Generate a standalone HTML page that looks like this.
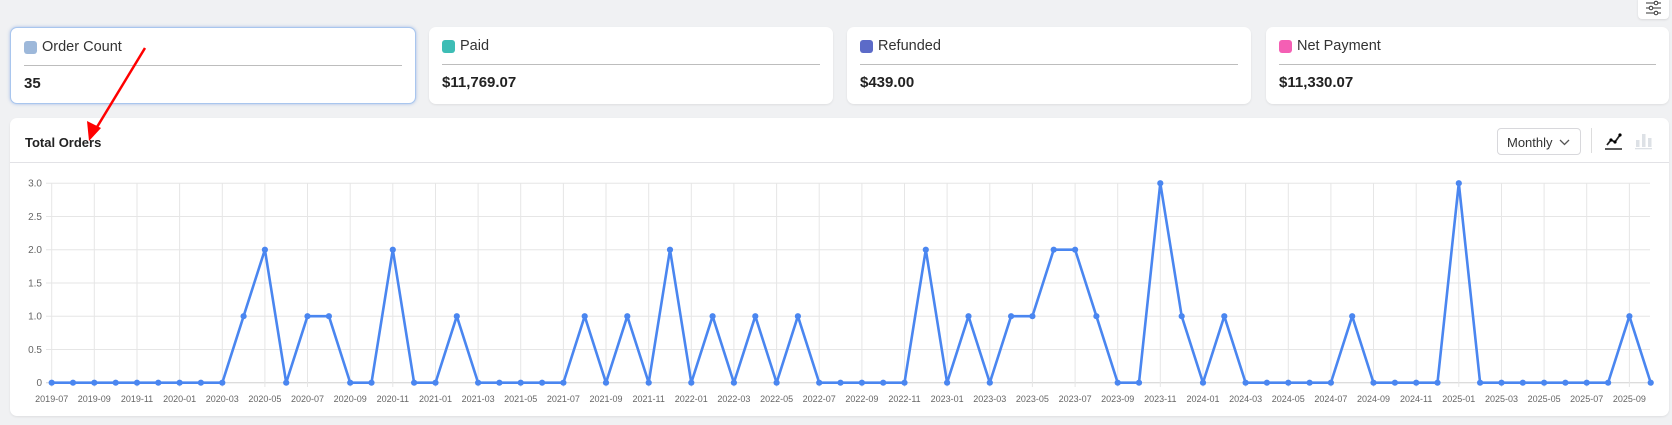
<!DOCTYPE html>
<html><head><meta charset="utf-8"><style>
*{box-sizing:border-box;margin:0;padding:0}
body{width:1672px;height:425px;background:#f0f1f3;font-family:"Liberation Sans",Arial,sans-serif;position:relative;overflow:hidden;color:#222}
.card{position:absolute;top:27px;height:77px;background:#fff;border-radius:7px;box-shadow:0 1px 2px rgba(0,0,0,.08)}
.card.sel{border:1px solid #a9c6ee;box-shadow:0 0 3px rgba(90,140,220,.5)}
.lab{position:absolute;left:13px;top:11px;font-size:14.5px;color:#333;display:flex;align-items:center}
.sw{width:13px;height:13px;border-radius:3px;margin-right:5px}
.div{position:absolute;left:13px;right:13px;top:37px;border-top:1px solid #bdbdbd}
.val{position:absolute;left:13px;top:47px;font-size:15px;font-weight:bold;color:#222}
.panel{position:absolute;left:10px;top:118px;width:1659px;height:298px;background:#fff;border-radius:7px;box-shadow:0 1px 2px rgba(0,0,0,.08)}
</style></head><body>
<div style="position:absolute;left:1638px;top:-4px;width:31px;height:23px;background:#fff;border-radius:4px;box-shadow:0 1px 2px rgba(0,0,0,.1)">
<svg width="31" height="23" viewBox="0 0 31 23"><g stroke="#333" stroke-width="1" fill="#fff"><line x1="8" y1="7" x2="23" y2="7"/><line x1="8" y1="12" x2="23" y2="12"/><line x1="8" y1="17" x2="23" y2="17"/><circle cx="18" cy="7" r="1.8"/><circle cx="13" cy="12" r="1.8"/><circle cx="18" cy="17" r="1.8"/></g></svg></div>

<div class="card sel" style="left:10px;width:406px"><div class="lab"><span class="sw" style="background:#9db8da"></span>Order Count</div><div class="div"></div><div class="val">35</div></div>
<div class="card" style="left:429px;width:404px"><div class="lab"><span class="sw" style="background:#3dbdb5"></span>Paid</div><div class="div"></div><div class="val">$11,769.07</div></div>
<div class="card" style="left:847px;width:404px"><div class="lab"><span class="sw" style="background:#5c6bc8"></span>Refunded</div><div class="div"></div><div class="val">$439.00</div></div>
<div class="card" style="left:1266px;width:403px"><div class="lab"><span class="sw" style="background:#f45fb4"></span>Net Payment</div><div class="div"></div><div class="val">$11,330.07</div></div>

<div class="panel">
<div style="position:absolute;left:15px;top:17px;font-size:13px;font-weight:bold;color:#222">Total Orders</div>
<div style="position:absolute;left:0;right:0;top:44px;border-top:1px solid #e2e2e6"></div>
<div style="position:absolute;left:1487px;top:10px;width:84px;height:27px;border:1px solid #d8d8dc;border-radius:4px;font-size:13px;color:#333;padding:6px 0 0 9px">Monthly
<svg style="position:absolute;right:10px;top:10px" width="11" height="7"><path d="M1 1 L5.5 5.5 L10 1" stroke="#555" stroke-width="1.3" fill="none"/></svg></div>
<div style="position:absolute;left:1581px;top:10px;height:25px;border-left:1px solid #ddd"></div>
<svg style="position:absolute;left:1595px;top:13px" width="20" height="20"><path d="M2 14 L6 9 L10 11 L15 4" stroke="#222" stroke-width="1.8" fill="none"/><circle cx="6" cy="9" r="1.6"/><circle cx="10" cy="11" r="1.6"/><circle cx="15" cy="4" r="1.6"/><line x1="0" y1="18" x2="17" y2="18" stroke="#222" stroke-width="1.5"/></svg>
<svg style="position:absolute;left:1625px;top:13px" width="20" height="20"><g fill="#dde1e6"><rect x="1" y="9" width="3.5" height="7"/><rect x="7" y="3" width="3.5" height="13"/><rect x="13" y="7" width="3.5" height="9"/><rect x="0" y="17" width="17" height="1.3"/></g></svg>
</div>

<svg style="position:absolute;left:0;top:0" width="1672" height="425">
<defs><marker id="m" markerUnits="userSpaceOnUse" markerWidth="8" markerHeight="8" refX="4" refY="4"><circle cx="4" cy="4" r="3.1" fill="#4a86f0"/></marker></defs>
<g stroke="#e6e6e6" stroke-width="1">
<line x1="46" y1="183.2" x2="1650" y2="183.2"/><line x1="46" y1="216.5" x2="1650" y2="216.5"/><line x1="46" y1="249.7" x2="1650" y2="249.7"/><line x1="46" y1="283" x2="1650" y2="283"/><line x1="46" y1="316.2" x2="1650" y2="316.2"/><line x1="46" y1="349.5" x2="1650" y2="349.5"/><line x1="46" y1="382.7" x2="1650" y2="382.7" stroke="#d0d0d0"/>
<line x1="51.7" y1="183" x2="51.7" y2="387"/><line x1="94.3" y1="183" x2="94.3" y2="387"/><line x1="137" y1="183" x2="137" y2="387"/><line x1="179.6" y1="183" x2="179.6" y2="387"/><line x1="222.3" y1="183" x2="222.3" y2="387"/><line x1="264.9" y1="183" x2="264.9" y2="387"/><line x1="307.5" y1="183" x2="307.5" y2="387"/><line x1="350.2" y1="183" x2="350.2" y2="387"/><line x1="392.8" y1="183" x2="392.8" y2="387"/><line x1="435.5" y1="183" x2="435.5" y2="387"/><line x1="478.1" y1="183" x2="478.1" y2="387"/><line x1="520.7" y1="183" x2="520.7" y2="387"/><line x1="563.4" y1="183" x2="563.4" y2="387"/><line x1="606" y1="183" x2="606" y2="387"/><line x1="648.7" y1="183" x2="648.7" y2="387"/><line x1="691.3" y1="183" x2="691.3" y2="387"/><line x1="733.9" y1="183" x2="733.9" y2="387"/><line x1="776.6" y1="183" x2="776.6" y2="387"/><line x1="819.2" y1="183" x2="819.2" y2="387"/><line x1="861.9" y1="183" x2="861.9" y2="387"/><line x1="904.5" y1="183" x2="904.5" y2="387"/><line x1="947.1" y1="183" x2="947.1" y2="387"/><line x1="989.8" y1="183" x2="989.8" y2="387"/><line x1="1032.4" y1="183" x2="1032.4" y2="387"/><line x1="1075.1" y1="183" x2="1075.1" y2="387"/><line x1="1117.7" y1="183" x2="1117.7" y2="387"/><line x1="1160.3" y1="183" x2="1160.3" y2="387"/><line x1="1203" y1="183" x2="1203" y2="387"/><line x1="1245.6" y1="183" x2="1245.6" y2="387"/><line x1="1288.3" y1="183" x2="1288.3" y2="387"/><line x1="1330.9" y1="183" x2="1330.9" y2="387"/><line x1="1373.5" y1="183" x2="1373.5" y2="387"/><line x1="1416.2" y1="183" x2="1416.2" y2="387"/><line x1="1458.8" y1="183" x2="1458.8" y2="387"/><line x1="1501.5" y1="183" x2="1501.5" y2="387"/><line x1="1544.1" y1="183" x2="1544.1" y2="387"/><line x1="1586.7" y1="183" x2="1586.7" y2="387"/><line x1="1629.4" y1="183" x2="1629.4" y2="387"/>
</g>
<g font-size="10" fill="#666" text-anchor="end" font-family="Liberation Sans,sans-serif">
<text x="42" y="186.5">3.0</text><text x="42" y="220">2.5</text><text x="42" y="253">2.0</text><text x="42" y="286.5">1.5</text><text x="42" y="319.5">1.0</text><text x="42" y="353">0.5</text><text x="42" y="386">0</text></g>
<g font-size="9" fill="#666" text-anchor="middle" font-family="Liberation Sans,sans-serif">
<text x="51.7" y="402">2019-07</text><text x="94.3" y="402">2019-09</text><text x="137" y="402">2019-11</text><text x="179.6" y="402">2020-01</text><text x="222.3" y="402">2020-03</text><text x="264.9" y="402">2020-05</text><text x="307.5" y="402">2020-07</text><text x="350.2" y="402">2020-09</text><text x="392.8" y="402">2020-11</text><text x="435.5" y="402">2021-01</text><text x="478.1" y="402">2021-03</text><text x="520.7" y="402">2021-05</text><text x="563.4" y="402">2021-07</text><text x="606" y="402">2021-09</text><text x="648.7" y="402">2021-11</text><text x="691.3" y="402">2022-01</text><text x="733.9" y="402">2022-03</text><text x="776.6" y="402">2022-05</text><text x="819.2" y="402">2022-07</text><text x="861.9" y="402">2022-09</text><text x="904.5" y="402">2022-11</text><text x="947.1" y="402">2023-01</text><text x="989.8" y="402">2023-03</text><text x="1032.4" y="402">2023-05</text><text x="1075.1" y="402">2023-07</text><text x="1117.7" y="402">2023-09</text><text x="1160.3" y="402">2023-11</text><text x="1203" y="402">2024-01</text><text x="1245.6" y="402">2024-03</text><text x="1288.3" y="402">2024-05</text><text x="1330.9" y="402">2024-07</text><text x="1373.5" y="402">2024-09</text><text x="1416.2" y="402">2024-11</text><text x="1458.8" y="402">2025-01</text><text x="1501.5" y="402">2025-03</text><text x="1544.1" y="402">2025-05</text><text x="1586.7" y="402">2025-07</text><text x="1629.4" y="402">2025-09</text></g>
<polyline fill="none" stroke="#4a86f0" stroke-width="2.6" stroke-linejoin="round" marker-start="url(#m)" marker-mid="url(#m)" marker-end="url(#m)" points="51.7,382.7 73,382.7 94.3,382.7 115.7,382.7 137,382.7 158.3,382.7 179.6,382.7 200.9,382.7 222.3,382.7 243.6,316.2 264.9,249.7 286.2,382.7 307.5,316.2 328.9,316.2 350.2,382.7 371.5,382.7 392.8,249.7 414.1,382.7 435.5,382.7 456.8,316.2 478.1,382.7 499.4,382.7 520.7,382.7 542.1,382.7 563.4,382.7 584.7,316.2 606,382.7 627.3,316.2 648.7,382.7 670,249.7 691.3,382.7 712.6,316.2 733.9,382.7 755.3,316.2 776.6,382.7 797.9,316.2 819.2,382.7 840.5,382.7 861.9,382.7 883.2,382.7 904.5,382.7 925.8,249.7 947.1,382.7 968.5,316.2 989.8,382.7 1011.1,316.2 1032.4,316.2 1053.7,249.7 1075.1,249.7 1096.4,316.2 1117.7,382.7 1139,382.7 1160.3,183.2 1181.7,316.2 1203,382.7 1224.3,316.2 1245.6,382.7 1266.9,382.7 1288.3,382.7 1309.6,382.7 1330.9,382.7 1352.2,316.2 1373.5,382.7 1394.9,382.7 1416.2,382.7 1437.5,382.7 1458.8,183.2 1480.1,382.7 1501.5,382.7 1522.8,382.7 1544.1,382.7 1565.4,382.7 1586.7,382.7 1608.1,382.7 1629.4,316.2 1650.7,382.7"/>
<path d="M145 48 L94 132" stroke="#f00" stroke-width="2.5"/><path d="M89 141 L87 121 L101 128 Z" fill="#f00"/>
</svg>
</body></html>
